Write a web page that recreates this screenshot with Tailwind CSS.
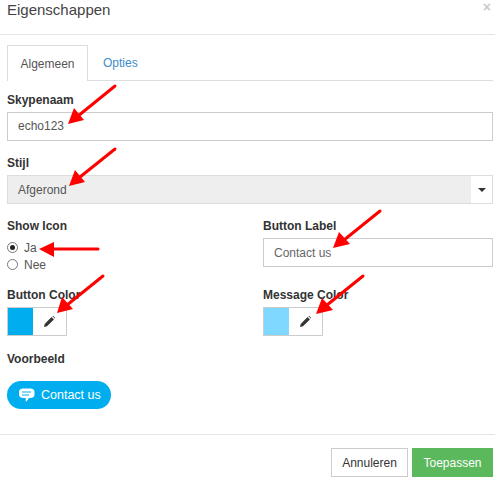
<!DOCTYPE html>
<html>
<head>
<meta charset="utf-8">
<script src="https://cdn.jsdelivr.net/npm/@tailwindcss/browser@4"></script>
</head>
<body class="bg-white">
<div class="relative w-[495px] h-[484px] overflow-hidden font-['Liberation_Sans',Arial,sans-serif] text-[12px] text-[#555]">
    <!-- header -->
    <div class="flex justify-between h-[35px] border-b border-[#e5e5e5] pl-[7px] pr-[4px]">
        <span class="text-[15px] leading-[20px] text-[#444]">Eigenschappen</span>
        <span class="text-[14px] leading-[14px] font-bold text-[#ccc]">×</span>
    </div>

    <div class="pl-[7px] pr-[2px]">
        <!-- tabs -->
        <div class="flex h-[36px] mt-[10px] border-b border-[#ddd]">
            <div class="w-[81px] h-[36px] border border-b-0 border-[#ddd] bg-white text-center leading-[36px] text-[#555]">Algemeen</div>
            <div class="ml-[15px] leading-[36px] text-[#428bca]">Opties</div>
        </div>

        <div class="mt-[12px] leading-[14px] font-bold text-[#333]">Skypenaam</div>
        <div class="mt-[5px] h-[29px] border border-[#ccc] px-[10px] leading-[27px]">echo123</div>

        <div class="mt-[15px] leading-[14px] font-bold text-[#333]">Stijl</div>
        <div class="mt-[5px] flex h-[29px] border border-[#ddd] bg-[#eee]">
            <div class="flex-1 px-[10px] leading-[28px]">Afgerond</div>
            <div class="w-[21px] flex items-center justify-center bg-white">
                <div class="w-0 h-0 border-x-[4px] border-x-transparent border-t-[4px] border-t-[#333]"></div>
            </div>
        </div>

        <div class="mt-[15px] grid grid-cols-[256px_1fr]">
            <div>
                <div class="leading-[14px] font-bold text-[#333]">Show Icon</div>
                <div class="mt-[6px] flex items-center gap-[6px] h-[17px]">
                    <span class="flex items-center justify-center w-[11px] h-[11px] rounded-full border border-[#777]">
                        <span class="w-[5px] h-[5px] rounded-full bg-[#222]"></span>
                    </span>
                    Ja
                </div>
                <div class="flex items-center gap-[6px] h-[17px]">
                    <span class="w-[11px] h-[11px] rounded-full border border-[#777]"></span>
                    Nee
                </div>
            </div>
            <div>
                <div class="leading-[14px] font-bold text-[#333]">Button Label</div>
                <div class="mt-[5px] h-[29px] border border-[#ccc] px-[10px] leading-[28px] text-[#666]">Contact us</div>
            </div>
        </div>

        <div class="mt-[15px] grid grid-cols-[256px_1fr]">
            <div>
                <div class="leading-[14px] font-bold text-[#333]">Button Color</div>
                <div class="mt-[5px] flex w-[60px] h-[29px] border border-[#ccc]">
                    <div class="w-[25px] bg-[#00aeef]"></div>
                    <div class="flex-1 flex items-center justify-center">
                        <svg class="w-[13px] h-[13px]" viewBox="0 0 13 13"><path d="M1 12l.7-3L8.600 2.100l2.300 2.300L4 11.300z" fill="#333"/><path d="M9.500 1.200l.6-.4 2.100 2.100-.5.7z" fill="#333"/></svg>
                    </div>
                </div>
            </div>
            <div>
                <div class="leading-[14px] font-bold text-[#333]">Message Color</div>
                <div class="mt-[5px] flex w-[60px] h-[29px] border border-[#ccc]">
                    <div class="w-[25px] bg-[#7fd8ff]"></div>
                    <div class="flex-1 flex items-center justify-center">
                        <svg class="w-[13px] h-[13px]" viewBox="0 0 13 13"><path d="M1 12l.7-3L8.600 2.100l2.300 2.300L4 11.300z" fill="#333"/><path d="M9.500 1.200l.6-.4 2.100 2.100-.5.7z" fill="#333"/></svg>
                    </div>
                </div>
            </div>
        </div>

        <div class="mt-[16px] leading-[14px] font-bold text-[#333]">Voorbeeld</div>
        <div class="mt-[15px] flex items-center gap-[6px] w-[104px] h-[28px] rounded-full bg-[#00aeef] pl-[11px] text-[12.500px] text-white">
            <svg class="w-[17px] h-[17px]" viewBox="0 0 17 17"><path d="M5 1.500h7.500c2.500 0 4 1.500 4 3.500v2.500c0 2-1.500 3.500-4 3.500h-1.500l-2.500 3.500c-.5.300-.8 0-.8-.5v-3h-2.700c-2.500 0-4-1.500-4-3.500v-2.500c0-2 1.500-3.500 4-3.500z" fill="#fff"/><path d="M4 5h9M4 8h7" stroke="#00aeef" stroke-width="1.200"/></svg>
            Contact us
        </div>
    </div>

    <!-- footer -->
    <div class="mt-[25px] flex justify-end gap-[4px] border-t border-[#e5e5e5] pt-[13px] pr-[2px]">
        <div class="w-[77px] h-[29px] border border-[#ccc] bg-white text-center leading-[28px] text-[#333]">Annuleren</div>
        <div class="w-[81px] h-[29px] bg-[#5cb85c] text-center leading-[30px] text-white">Toepassen</div>
    </div>

    <!-- red annotation arrows -->
    <svg class="absolute left-0 top-0 w-[495px] h-[484px] pointer-events-none" viewBox="0 0 495 484">
        <g stroke="#f00" stroke-width="3" fill="#f00" stroke-linecap="round">
            <path d="M115 86L78 116"/><path d="M68 124L74 108L84 120z" stroke="none"/>
            <path d="M115 149L80 177"/><path d="M69 186L75 170L85 182z" stroke="none"/>
            <path d="M98 249L50 249"/><path d="M39 249L54 242L54 257z" stroke="none"/>
            <path d="M103 276L67 305"/><path d="M57 313L62 297L73 309z" stroke="none"/>
            <path d="M380 211L344 240"/><path d="M333 248L339 232L350 244z" stroke="none"/>
            <path d="M363 276L327 305"/><path d="M316 314L322 298L333 310z" stroke="none"/>
        </g>
    </svg>
</div>
</body>
</html>
